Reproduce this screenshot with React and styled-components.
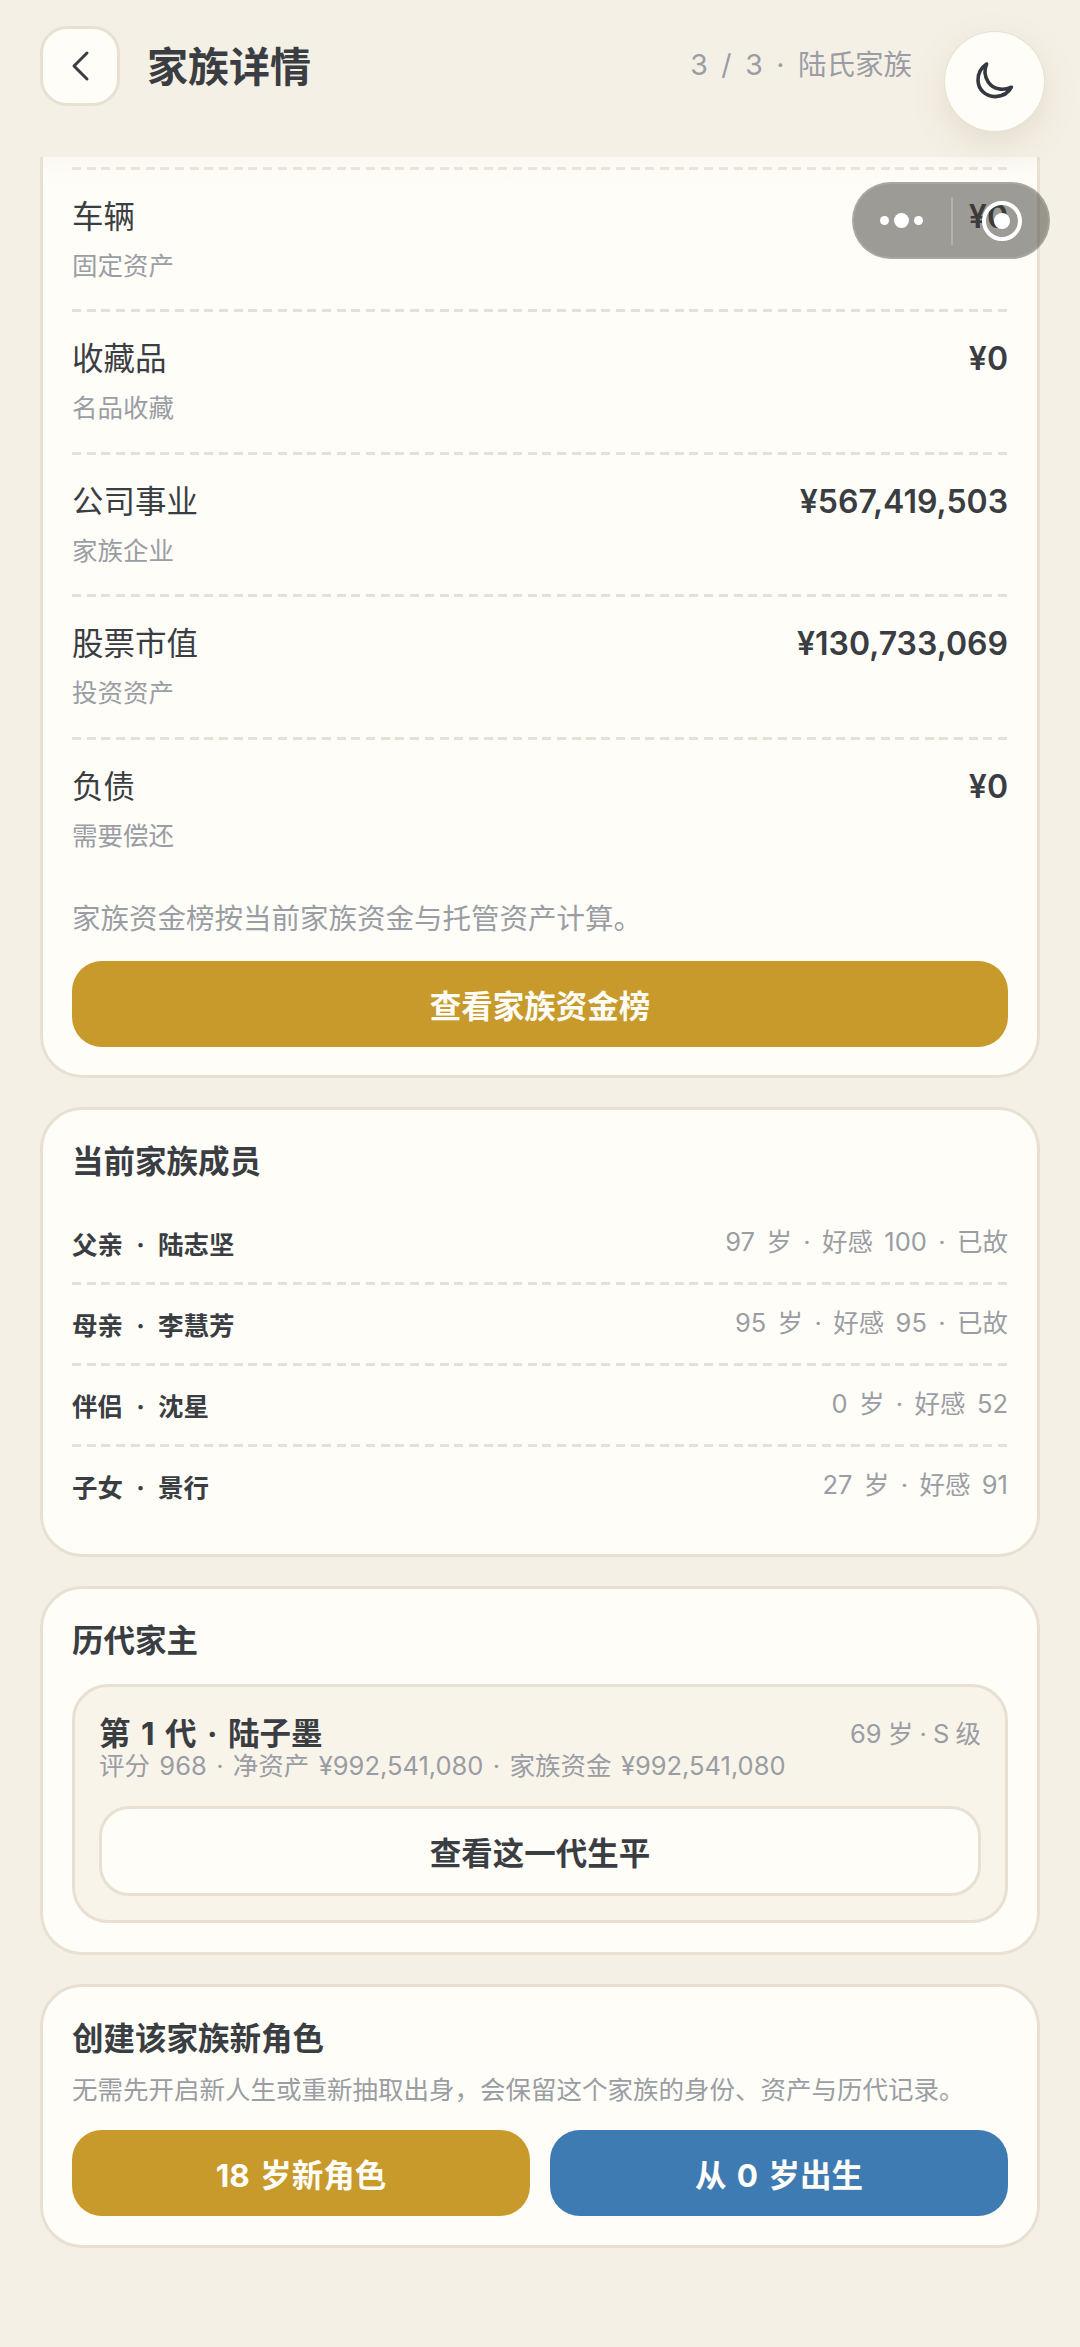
import React from 'react';
import styled, { createGlobalStyle } from 'styled-components';

const ASSETS = [
  { name: '车辆', note: '固定资产', value: '¥0' },
  { name: '收藏品', note: '名品收藏', value: '¥0' },
  { name: '公司事业', note: '家族企业', value: '¥567,419,503' },
  { name: '股票市值', note: '投资资产', value: '¥130,733,069' },
  { name: '负债', note: '需要偿还', value: '¥0' },
];

const MEMBERS = [
  { name: '父亲 · 陆志坚', info: '97 岁 · 好感 100 · 已故' },
  { name: '母亲 · 李慧芳', info: '95 岁 · 好感 95 · 已故' },
  { name: '伴侣 · 沈星', info: '0 岁 · 好感 52' },
  { name: '子女 · 景行', info: '27 岁 · 好感 91' },
];

export default function App() {
  return (
    <Page>
      <GlobalStyle />
      <Header>
        <BackButton>
          <svg width="36" height="36" viewBox="0 0 36 36" fill="none">
            <path d="M25 5 L12 18 L25 31" stroke="#3a3d42" strokeWidth="3" strokeLinecap="round" strokeLinejoin="round" />
          </svg>
        </BackButton>
        <Title>家族详情</Title>
        <Progress>3 / 3 · 陆氏家族</Progress>
      </Header>

      <Content>
        <AssetCard>
          <TopFade />
          {ASSETS.map((item, i) => (
            <AssetRow key={item.name} $last={i === ASSETS.length - 1}>
              <div>
                <AssetName>{item.name}</AssetName>
                <AssetNote>{item.note}</AssetNote>
              </div>
              <AssetValue>{item.value}</AssetValue>
            </AssetRow>
          ))}
          <Note>家族资金榜按当前家族资金与托管资产计算。</Note>
          <ActionButton>查看家族资金榜</ActionButton>
        </AssetCard>

        <Card>
          <CardTitle>当前家族成员</CardTitle>
          <MemberList>
            {MEMBERS.map((m, i) => (
              <MemberRow key={m.name} $last={i === MEMBERS.length - 1}>
                <MemberName>{m.name}</MemberName>
                <MemberInfo>{m.info}</MemberInfo>
              </MemberRow>
            ))}
          </MemberList>
        </Card>

        <Card>
          <CardTitle>历代家主</CardTitle>
          <HeirBox>
            <HeirTop>
              <HeirName>第 1 代 · 陆子墨</HeirName>
              <HeirAge>69 岁 · S 级</HeirAge>
            </HeirTop>
            <HeirStats>评分 968 · 净资产 ¥992,541,080 · 家族资金 ¥992,541,080</HeirStats>
            <GhostButton>查看这一代生平</GhostButton>
          </HeirBox>
        </Card>

        <CreateCard>
          <CardTitle>创建该家族新角色</CardTitle>
          <CreateNote>无需先开启新人生或重新抽取出身，会保留这个家族的身份、资产与历代记录。</CreateNote>
          <ButtonRow>
            <ActionButton>18 岁新角色</ActionButton>
            <ActionButton $color="#3f7bb3">从 0 岁出生</ActionButton>
          </ButtonRow>
        </CreateCard>
      </Content>

      <ThemeToggle>
        <svg width="48" height="48" viewBox="0 0 24 24" fill="none">
          <path
            d="M7.8 3C4.9 5 3.4 8 3.5 11.2C3.6 15.8 7.4 19.4 12.2 19.3C15.7 19.2 18.7 17.5 20.2 14.6C15.8 16.6 11 15.6 8.6 12C6.8 9.2 6.6 5.8 7.8 3Z"
            stroke="#343840"
            strokeWidth="1.8"
            strokeLinecap="round"
            strokeLinejoin="round"
          />
        </svg>
      </ThemeToggle>

      <Capsule>
        <Dots>
          <Dot $size={9} />
          <Dot $size={15} />
          <Dot $size={9} />
        </Dots>
        <CapsuleDivider />
        <CloseRing />
      </Capsule>
    </Page>
  );
}

const GlobalStyle = createGlobalStyle`
  html, body {
    margin: 0;
    padding: 0;
    background: #f5f0e6;
  }
  * {
    box-sizing: border-box;
  }
  body {
    font-family: Inter, "Noto Sans CJK SC", sans-serif;
    color: #3a3d42;
  }
`;

const Page = styled.div`
  position: relative;
  width: 1080px;
  height: 2347px;
  overflow: hidden;
  background: #f5f0e6;
`;

const Header = styled.header`
  display: flex;
  align-items: flex-start;
  height: 157px;
  padding: 26px 0 0 40px;
`;

const BackButton = styled.div`
  display: flex;
  align-items: center;
  justify-content: center;
  width: 80px;
  height: 80px;
  background: #fffdf8;
  border: 3px solid #e8e0d2;
  border-radius: 27px;
`;

const Title = styled.h1`
  margin: 0 0 0 27px;
  font-size: 41px;
  line-height: 82px;
  font-weight: 700;
`;

const Progress = styled.div`
  margin-left: auto;
  margin-right: 168px;
  font-size: 28.5px;
  line-height: 78px;
  word-spacing: 5.5px;
  color: #9a9da3;
`;

const Content = styled.main`
  display: flex;
  flex-direction: column;
  gap: 29px;
  padding: 0 40px;
`;

const Card = styled.section`
  padding: 30px 29px 26px;
  background: #fffdf8;
  border: 3px solid #e8e0d2;
  border-radius: 42px;
`;

const AssetCard = styled(Card)`
  position: relative;
  padding-top: 10px;
  padding-bottom: 28px;
  border-top: none;
  border-radius: 0 0 42px 42px;
`;

const CreateCard = styled(Card)`
  padding-bottom: 29px;
`;

const TopFade = styled.div`
  position: absolute;
  top: 0;
  left: 0;
  right: 0;
  height: 24px;
  background: linear-gradient(#f5f0e666, #f5f0e600);
`;

const dashed = `
  background-image: repeating-linear-gradient(90deg, #e6e1d7 0 9px, transparent 9px 14.7px);
  background-size: 100% 3px;
  background-repeat: no-repeat;
`;

const AssetRow = styled.div`
  display: flex;
  justify-content: space-between;
  align-items: flex-start;
  height: ${props => (props.$last ? '162px' : '142.4px')};
  padding-top: 28px;
  ${dashed}
  background-position: top;
`;

const AssetName = styled.div`
  font-size: 31.5px;
  line-height: 44px;
`;

const AssetNote = styled.div`
  margin-top: 9px;
  font-size: 25.5px;
  line-height: 36px;
  color: #9a9da3;
`;

const AssetValue = styled.div`
  font-size: 32px;
  line-height: 44px;
  font-weight: 600;
`;

const Note = styled.p`
  margin: 0 0 22px;
  font-size: 28.5px;
  line-height: 40px;
  color: #9a9da3;
`;

const ActionButton = styled.div`
  display: flex;
  flex: 1;
  align-items: center;
  justify-content: center;
  height: 86px;
  color: #fffdf8;
  background: ${props => props.$color || '#c79a2b'};
  border-radius: 30px;
  font-size: 31.5px;
  font-weight: 700;
  word-spacing: 3px;
`;

const CardTitle = styled.h2`
  margin: 0;
  font-size: 31.5px;
  line-height: 44px;
  font-weight: 700;
`;

const MemberList = styled.div`
  margin-top: 20px;
`;

const MemberRow = styled.div`
  display: flex;
  justify-content: space-between;
  height: 81px;
  padding-top: 18px;
  ${dashed}
  background-position: bottom;
  ${props => props.$last && 'background-image: none;'}
`;

const MemberName = styled.div`
  font-size: 25.5px;
  line-height: 46px;
  font-weight: 700;
  word-spacing: 7.2px;
`;

const MemberInfo = styled.div`
  font-size: 25.5px;
  line-height: 40px;
  word-spacing: 4.2px;
  color: #9a9da3;
`;

const HeirBox = styled.div`
  margin-top: 21px;
  margin-bottom: 3px;
  padding: 31px 24px 24px;
  background: #f9f4ea;
  border: 3px solid #e8e0d2;
  border-radius: 36px;
`;

const HeirTop = styled.div`
  display: flex;
  justify-content: space-between;
  align-items: flex-start;
`;

const HeirName = styled.div`
  font-size: 31.5px;
  line-height: 32px;
  font-weight: 700;
  word-spacing: 3px;
`;

const HeirAge = styled.div`
  font-size: 25.5px;
  line-height: 32px;
  word-spacing: -1px;
  color: #9a9da3;
`;

const HeirStats = styled.div`
  font-size: 25.5px;
  line-height: 32px;
  word-spacing: 2.2px;
  color: #9a9da3;
`;

const GhostButton = styled.div`
  display: flex;
  align-items: center;
  justify-content: center;
  height: 90px;
  margin-top: 24px;
  background: #fffdf8;
  border: 3px solid #e8e0d2;
  border-radius: 30px;
  font-size: 31.5px;
  font-weight: 700;
`;

const CreateNote = styled.p`
  margin: 11px 0 0;
  font-size: 25.5px;
  line-height: 36px;
  white-space: nowrap;
  color: #9a9da3;
`;

const ButtonRow = styled.div`
  display: flex;
  gap: 20px;
  margin-top: 22px;
`;

const ThemeToggle = styled.div`
  position: absolute;
  top: 32px;
  left: 945px;
  display: flex;
  align-items: center;
  justify-content: center;
  width: 99px;
  height: 99px;
  background: #fffdf8;
  border-radius: 50%;
  box-shadow: 0 0 0 1px #e8e0d2, 0 12px 36px rgba(120, 100, 60, 0.14);
`;

const Capsule = styled.div`
  position: absolute;
  top: 182px;
  left: 852px;
  display: flex;
  align-items: center;
  width: 198px;
  height: 77px;
  background: rgba(60, 58, 50, 0.5);
  border: 2px solid rgba(255, 255, 255, 0.12);
  border-radius: 39px;
`;

const Dots = styled.div`
  display: flex;
  align-items: center;
  justify-content: center;
  gap: 5px;
  width: 97px;
  padding-right: 3px;
`;

const Dot = styled.span`
  width: ${props => props.$size}px;
  height: ${props => props.$size}px;
  background: #fff;
  border-radius: 50%;
`;

const CapsuleDivider = styled.div`
  width: 2px;
  height: 48px;
  background: rgba(255, 255, 255, 0.22);
`;

const CloseRing = styled.div`
  display: flex;
  align-items: center;
  justify-content: center;
  width: 40px;
  height: 40px;
  margin-left: 29px;
  border: 4px solid #fff;
  border-radius: 50%;

  &::after {
    content: '';
    width: 16px;
    height: 16px;
    background: #fff;
    border-radius: 50%;
  }
`;
